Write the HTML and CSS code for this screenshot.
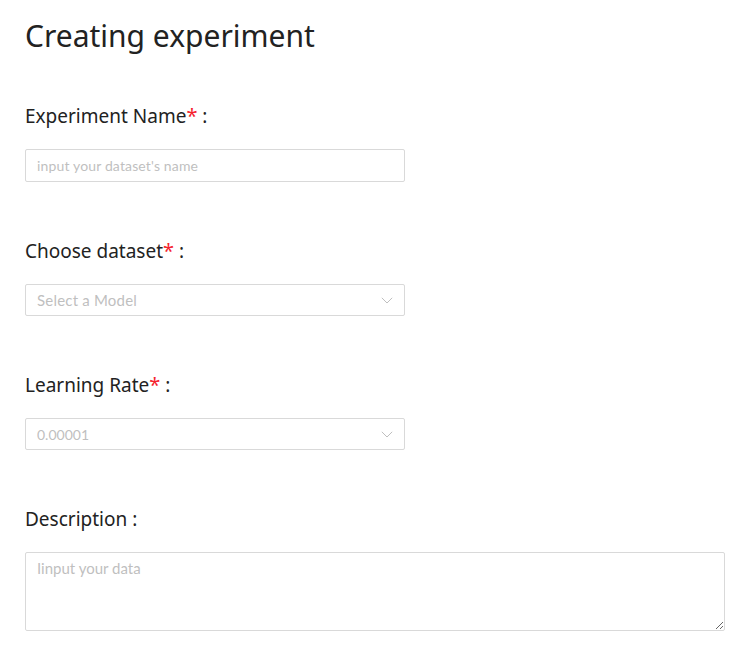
FILE: index.html
```html
<!DOCTYPE html>
<html>
<head>
<meta charset="utf-8">
<link rel="stylesheet" href="styles.css">
</head>
<body>
<div class="page">
  <h1 class="title">Creating experiment</h1>
  <div class="field">
    <label class="label">Experiment Name<span class="req">*</span> :</label>
    <input class="control input" type="text" placeholder="input your dataset's name">
  </div>
  <div class="field">
    <label class="label">Choose dataset<span class="req">*</span> :</label>
    <div class="control select">
      <span class="ph">Select a Model</span>
      <svg class="chev" width="12" height="7" viewBox="0 0 12 7"><path d="M0.8 0.8 L6 6 L11.2 0.8" fill="none" stroke="#bfbfbf" stroke-width="1"/></svg>
    </div>
  </div>
  <div class="field">
    <label class="label">Learning Rate<span class="req">*</span> :</label>
    <div class="control select">
      <span class="ph num">0.00001</span>
      <svg class="chev" width="12" height="7" viewBox="0 0 12 7"><path d="M0.8 0.8 L6 6 L11.2 0.8" fill="none" stroke="#bfbfbf" stroke-width="1"/></svg>
    </div>
  </div>
  <div class="field last">
    <label class="label">Description :</label>
    <textarea class="textarea" placeholder="Iinput your data"></textarea>
  </div>
</div>
</body>
</html>
```
FILE: styles.css
```css
html, body { margin: 0; padding: 0; background: #fff; }
.page {
  padding: 18px 25px 0 25px;
  display: flex;
  flex-direction: column;
  font-family: "Noto Sans", sans-serif;
  color: #222;
}
.title {
  margin: 0 0 50px 0;
  font-size: 30px;
  line-height: 36px;
  font-weight: 400;
  color: #222;
}
.field {
  display: flex;
  flex-direction: column;
  margin-bottom: 57px;
}
.field.last { margin-bottom: 0; }
.label {
  display: block;
  height: 24px;
  font-size: 19px;
  line-height: 24px;
  margin-bottom: 21px;
  color: #222;
}
.req { color: #f5222d; font-size: 20px; line-height: 0; }
.control {
  box-sizing: border-box;
  width: 380px;
  height: 32px;
  border: 1px solid #d9d9d9;
  border-radius: 2px;
  font-family: Lato, "Noto Sans", sans-serif;
  font-size: 14px;
  letter-spacing: 0.15px;
  padding: 0 11px;
  background: #fff;
}
.input { outline: none; color: #222; height: 33px; }
.input::placeholder { color: #bfbfbf; }
.select {
  display: flex;
  align-items: center;
  justify-content: space-between;
}
.ph { color: #bfbfbf; }
.select .ph { font-size: 15px; letter-spacing: 0.2px; }
.select .ph.num { font-size: 14px; letter-spacing: 0; }
.chev { margin-right: 0; }
.textarea {
  box-sizing: border-box;
  width: 700px;
  height: 79px;
  border: 1px solid #d9d9d9;
  border-radius: 2px;
  padding: 6px 11px;
  font-family: Lato, "Noto Sans", sans-serif;
  font-size: 15px;
  outline: none;
  resize: vertical;
}
.textarea::placeholder { color: #bfbfbf; }
```
